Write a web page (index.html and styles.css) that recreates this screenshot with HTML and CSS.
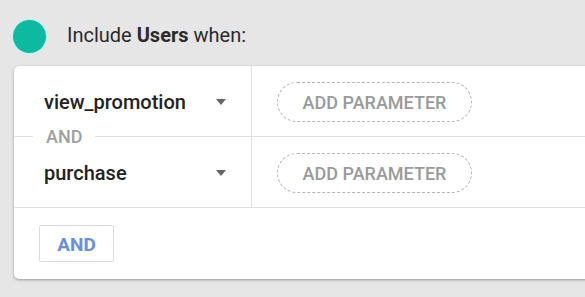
FILE: index.html
```html
<!DOCTYPE html>
<html>
<head>
<meta charset="utf-8">
<link rel="stylesheet" href="styles.css">
</head>
<body>
<div class="page">
  <div class="header">
    <span class="dot"></span>
    <span class="title">Include <b>Users</b> when:</span>
  </div>
  <div class="card">
    <div class="row">
      <div class="event">
        <span class="event-name">view_promotion</span>
        <span class="caret"></span>
      </div>
      <div class="params">
        <button class="add-param">ADD PARAMETER</button>
      </div>
      <span class="and-label">AND</span>
    </div>
    <div class="row">
      <div class="event">
        <span class="event-name">purchase</span>
        <span class="caret"></span>
      </div>
      <div class="params">
        <button class="add-param">ADD PARAMETER</button>
      </div>
    </div>
    <div class="footer">
      <button class="and-btn">AND</button>
    </div>
  </div>
</div>
</body>
</html>
```
FILE: styles.css
```css
html, body {
  margin: 0;
  padding: 0;
  background: #e6e6e6;
  overflow: hidden;
  font-family: Roboto, "Liberation Sans", sans-serif;
}
.page {
  width: 585px;
  height: 297px;
  overflow: hidden;
}
.header {
  display: flex;
  align-items: center;
  height: 66px;
  padding-left: 13px;
  box-sizing: border-box;
}
.dot {
  width: 33px;
  height: 33px;
  border-radius: 50%;
  background: #0dbaa0;
  box-shadow: 0 0 0 1px #b7f3ea;
  margin-top: 7px;
}
.title {
  margin-left: 21px;
  margin-top: 3px;
  font-size: 20px;
  color: #2b2b2b;
}
.title b {
  font-weight: 700;
}
.card {
  margin-left: 14px;
  width: 620px;
  background: #fff;
  border-radius: 5px;
  box-shadow: 0 1px 3px rgba(0,0,0,0.35);
}
.row {
  position: relative;
  display: flex;
  height: 71px;
  border-bottom: 1px solid #e0e0e0;
  box-sizing: border-box;
}
.event {
  width: 238px;
  border-right: 1px solid #e0e0e0;
  display: flex;
  align-items: center;
  padding-left: 30px;
  padding-top: 2px;
  box-sizing: border-box;
}
.event-name {
  font-size: 20px;
  font-weight: 500;
  color: #222;
  width: 172px;
}
.caret {
  width: 0;
  height: 0;
  border-left: 5.5px solid transparent;
  border-right: 5.5px solid transparent;
  border-top: 6px solid #666;
}
.params {
  display: flex;
  align-items: center;
  padding-left: 25px;
  padding-top: 1px;
}
.add-param {
  width: 195px;
  height: 40px;
  border: 1px dashed #b5b5b5;
  border-radius: 20px;
  background: #fff;
  color: #9a9a9a;
  font-family: Roboto, "Liberation Sans", sans-serif;
  font-size: 18px;
  font-weight: 500;
  padding: 2px 0 0 0;
}
.and-label {
  position: absolute;
  left: 19px;
  bottom: -10px;
  background: #fff;
  padding: 0 13px;
  font-size: 18px;
  font-weight: 500;
  color: #a0a0a0;
  line-height: 18px;
}
.footer {
  height: 71px;
  display: flex;
  align-items: center;
  padding-left: 25px;
}
.and-btn {
  width: 75px;
  height: 37px;
  border: 1px solid #dcdcdc;
  border-radius: 2px;
  background: #fff;
  color: #6790d8;
  font-family: Roboto, "Liberation Sans", sans-serif;
  font-size: 19px;
  font-weight: 700;
  padding: 1px 0 0 0;
}
```
